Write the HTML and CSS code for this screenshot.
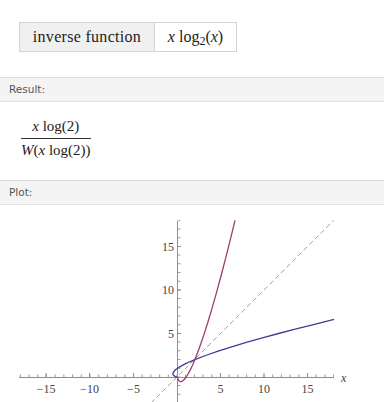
FILE: index.html
```html
<!doctype html>
<html lang="en">
  <head>
    <meta charset="UTF-8" />
    <title>inverse function</title>
    <link rel="stylesheet" href="styles.css">
  </head>
  <body>
    <div class="input">
      <table class="query">
        <tr>
          <td class="query-label">inverse function</td>
          <td class="query-value"><i>x</i> log<sub>2</sub>(<i>x</i>)</td>
        </tr>
      </table>
    </div>

    <div class="pod-title">Result:</div>
    <div class="pod-body result">
      <div class="frac">
        <span class="num"><i>x</i> log(2)</span>
        <span class="den"><i>W</i>(<i>x</i> log(2))</span>
      </div>
    </div>

    <div class="pod-title">Plot:</div>
    <div class="pod-body plot">
      <svg width="384" height="197" viewBox="0 205 384 197">
        <!-- axes -->
        <line class="axis" x1="19" y1="377.5" x2="334" y2="377.5" />
        <line class="axis" x1="177.5" y1="221" x2="177.5" y2="405" />
        <!-- minor ticks, 1 unit = 8.7px -->
        <line class="tick" x1="19.9" y1="376" x2="334" y2="376" />
        <line class="tick tick-y" x1="179" y1="403" x2="179" y2="220" />
        <!-- major ticks -->
        <path class="axis" d="M46 377v-4M89.5 377v-4M133.5 377v-4M220.5 377v-4M264 377v-4M307.5 377v-4M177 333.5h4M177 290h4M177 246.5h4" />

        <line class="diag" x1="150.9" y1="403.1" x2="333.6" y2="220.4" />

        <g transform="translate(177.5 377) scale(8.7 -8.7)">
          <polyline class="curve inv" points="0,0 -0.1,0.015 -0.216,0.05 -0.332,0.1 -0.464,0.2 -0.521,0.3 -0.531,0.368 -0.518,0.45 -0.442,0.6 -0.258,0.8 0,1 0.402,1.25 0.877,1.5 1.4,1.75 2,2 3.305,2.5 4.755,3 6.326,3.5 8,4 9.764,4.5 11.61,5 13.53,5.5 15.51,6 17.55,6.5 18,6.61" />
          <polyline class="curve fn" points="0,0 0.015,-0.1 0.05,-0.216 0.1,-0.332 0.2,-0.464 0.3,-0.521 0.368,-0.531 0.45,-0.518 0.6,-0.442 0.8,-0.258 1,0 1.25,0.402 1.5,0.877 1.75,1.4 2,2 2.5,3.305 3,4.755 3.5,6.326 4,8 4.5,9.764 5,11.61 5.5,13.53 6,15.51 6.5,17.55 6.61,18" />
        </g>

        <g class="labels">
          <text x="46" y="393">−15</text>
          <text x="89.5" y="393">−10</text>
          <text x="133.5" y="393">−5</text>
          <text x="220.5" y="393">5</text>
          <text x="264" y="393">10</text>
          <text x="307.5" y="393">15</text>
        </g>
        <g class="labels labels-y">
          <text x="174" y="337.5">5</text>
          <text x="174" y="294">10</text>
          <text x="174" y="250.5">15</text>
        </g>
        <text class="axis-name" x="341" y="382">x</text>
      </svg>
    </div>
  </body>
</html>
```

FILE: styles.css
```css
body {
  margin: 0;
  width: 384px;
  background-color: #ffffff;
  font-family: "Liberation Serif", "Times New Roman", serif;
  color: #222;
}
.input {
  height: 77px;
  box-sizing: border-box;
  padding: 22px 0 0 19px;
}
.query {
  border-collapse: collapse;
  font-size: 16px;
}
.query td {
  border: 1px solid #d3d3d3;
  height: 28px;
  padding: 0;
  text-align: center;
  line-height: 28px;
}
.query-label {
  width: 134px;
  background-color: #f0f0f0;
  letter-spacing: 0.3px;
}
.query-value {
  width: 81px;
}
.query-value sub {
  font-size: 12px;
  vertical-align: -3px;
  line-height: 0;
}
.pod-title {
  height: 23px;
  border-top: 1px solid #dcdcdc;
  border-bottom: 1px solid #e2e2e2;
  background-color: #f4f4f4;
  padding-left: 9px;
  font-family: "DejaVu Sans", Verdana, sans-serif;
  font-size: 10.5px;
  line-height: 23px;
  color: #555;
}
.result {
  height: 78px;
  box-sizing: border-box;
  padding: 15px 0 0 21px;
}
.frac {
  display: inline-flex;
  flex-direction: column;
  align-items: center;
  font-size: 15px;
  line-height: 17px;
}
.num {
  padding: 0 1px 3px;
  border-bottom: 1px solid #333;
  align-self: stretch;
  text-align: center;
}
.den {
  padding-top: 3px;
}
.plot svg {
  display: block;
}
.axis {
  stroke: #8c8c8c;
  stroke-width: 1;
  fill: none;
}
.tick {
  stroke: #9a9a9a;
  stroke-width: 3;
  stroke-dasharray: 1 7.7;
}
.tick-y {
  stroke-dashoffset: 0.5;
}
.diag {
  stroke: #a0a0a0;
  stroke-width: 1;
  stroke-dasharray: 5 3;
}
.curve {
  fill: none;
  stroke-width: 1.3;
  stroke-linejoin: round;
  vector-effect: non-scaling-stroke;
}
.inv {
  stroke: #3d3d99;
}
.fn {
  stroke: #993d71;
}
.labels text {
  font-family: "Liberation Serif", serif;
  font-size: 12px;
  fill: #444;
  text-anchor: middle;
}
.labels-y text {
  text-anchor: end;
}
.axis-name {
  font-family: "Liberation Serif", serif;
  font-style: italic;
  font-size: 12px;
  fill: #444;
}
```
